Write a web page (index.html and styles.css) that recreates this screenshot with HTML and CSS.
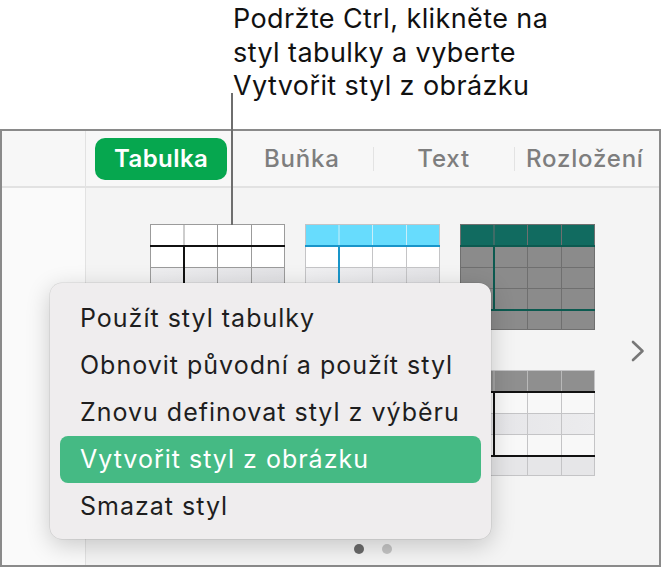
FILE: index.html
```html
<!DOCTYPE html>
<html lang="cs">
<head>
    <meta charset="UTF-8">
    <meta name="viewport" content="width=device-width, initial-scale=1.0">
    <title>Styl tabulky</title>
    <link rel="stylesheet" href="styles.css">
</head>
<body>

    <div class="callout">
        Podržte Ctrl, klikněte na<br>
        styl tabulky a vyberte<br>
        Vytvořit styl z obrázku
    </div>
    <div class="leader"></div>

    <div class="window">
        <div class="side-top"></div>
        <div class="tabs">
            <div class="tab active">Tabulka</div>
            <div class="tab">Buňka</div>
            <div class="tab sep">Text</div>
            <div class="tab sep">Rozložení</div>
        </div>
        <div class="sidebar"></div>
        <div class="pane">
            <div class="thumbs">
                <!-- plain -->
                <svg class="thumb" viewBox="0 0 135 106" width="135" height="106">
                    <defs>
                        <linearGradient id="g1" x1="0" y1="0" x2="1" y2="0">
                            <stop offset="0" stop-color="#eeeef0"/>
                            <stop offset="1" stop-color="#e2e2e5"/>
                        </linearGradient>
                    </defs>
                    <rect x="0" y="0" width="135" height="106" fill="#fff"/>
                    <rect x="0" y="43" width="135" height="21" fill="url(#g1)"/>
                    <rect x="0" y="85" width="135" height="21" fill="url(#g1)"/>
                    <g stroke="#9b9b9b" stroke-width="1">
                        <line x1="34" y1="0" x2="34" y2="22"/>
                        <line x1="67.5" y1="0" x2="67.5" y2="106"/>
                        <line x1="101.5" y1="0" x2="101.5" y2="106"/>
                        <line x1="0" y1="43.5" x2="135" y2="43.5"/>
                        <line x1="0" y1="64.5" x2="135" y2="64.5"/>
                        <line x1="0" y1="85.5" x2="135" y2="85.5"/>
                        <rect x="0.5" y="0.5" width="134" height="105" fill="none"/>
                    </g>
                    <line x1="0" y1="22" x2="135" y2="22" stroke="#111" stroke-width="2"/>
                    <line x1="34" y1="22" x2="34" y2="106" stroke="#111" stroke-width="2"/>
                </svg>
                <!-- cyan -->
                <svg class="thumb" viewBox="0 0 135 106" width="135" height="106">
                    <defs>
                        <linearGradient id="g2" x1="0" y1="0" x2="1" y2="0">
                            <stop offset="0" stop-color="#f0f0f2"/>
                            <stop offset="1" stop-color="#e4e4e7"/>
                        </linearGradient>
                    </defs>
                    <rect x="0" y="0" width="135" height="106" fill="#fff"/>
                    <rect x="0" y="0" width="135" height="22" fill="#67dcfd"/>
                    <rect x="0" y="43" width="135" height="21" fill="url(#g2)"/>
                    <rect x="0" y="85" width="135" height="21" fill="url(#g2)"/>
                    <g stroke="#c9eef9" stroke-width="1">
                        <line x1="34" y1="0" x2="34" y2="22"/>
                        <line x1="67.5" y1="0" x2="67.5" y2="22"/>
                        <line x1="101.5" y1="0" x2="101.5" y2="22"/>
                    </g>
                    <g stroke="#c4c4c6" stroke-width="1">
                        <line x1="67.5" y1="22" x2="67.5" y2="106"/>
                        <line x1="101.5" y1="22" x2="101.5" y2="106"/>
                        <line x1="0" y1="43.5" x2="135" y2="43.5"/>
                        <line x1="0" y1="64.5" x2="135" y2="64.5"/>
                        <line x1="0" y1="85.5" x2="135" y2="85.5"/>
                        <rect x="0.5" y="0.5" width="134" height="105" fill="none"/>
                    </g>
                    <line x1="0" y1="22" x2="135" y2="22" stroke="#1995c9" stroke-width="2"/>
                    <line x1="34" y1="22" x2="34" y2="106" stroke="#1995c9" stroke-width="2"/>
                </svg>
                <!-- teal / grey -->
                <svg class="thumb" viewBox="0 0 135 106" width="135" height="106">
                    <rect x="0" y="0" width="135" height="106" fill="#8b8b8b"/>
                    <rect x="0" y="0" width="135" height="22" fill="#116b60"/>
                    <g stroke="#6f6f6f" stroke-width="1">
                        <line x1="34" y1="0" x2="34" y2="22"/>
                        <line x1="67.5" y1="0" x2="67.5" y2="106"/>
                        <line x1="101.5" y1="0" x2="101.5" y2="106"/>
                        <line x1="0" y1="43.5" x2="135" y2="43.5"/>
                        <line x1="0" y1="64.5" x2="135" y2="64.5"/>
                        <rect x="0.5" y="0.5" width="134" height="105" fill="none"/>
                    </g>
                    <line x1="0" y1="22" x2="135" y2="22" stroke="#0c5a50" stroke-width="2"/>
                    <line x1="34" y1="22" x2="34" y2="86" stroke="#0c5a50" stroke-width="2"/>
                    <line x1="0" y1="86" x2="135" y2="86" stroke="#0c5a50" stroke-width="2"/>
                </svg>
                <!-- row 2 -->
                <svg class="thumb" viewBox="0 0 135 106" width="135" height="106">
                    <rect x="0" y="0" width="135" height="106" fill="#fff"/>
                    <rect x="0" y="0" width="135" height="22" fill="#dcdcdc"/>
                </svg>
                <svg class="thumb" viewBox="0 0 135 106" width="135" height="106">
                    <rect x="0" y="0" width="135" height="106" fill="#fff"/>
                    <rect x="0" y="0" width="135" height="22" fill="#8e8e8e"/>
                </svg>
                <svg class="thumb" viewBox="0 0 135 106" width="135" height="106">
                    <defs>
                        <linearGradient id="g4" x1="0" y1="0" x2="1" y2="0">
                            <stop offset="0" stop-color="#e4e4e7"/>
                            <stop offset="1" stop-color="#ececee"/>
                        </linearGradient>
                    </defs>
                    <rect x="0" y="0" width="135" height="106" fill="#f8f8f8"/>
                    <rect x="0" y="43" width="135" height="21" fill="url(#g4)"/>
                    <rect x="0" y="85" width="135" height="21" fill="#e6e6e8"/>
                    <rect x="0" y="0" width="135" height="22" fill="#8f8f8f"/>
                    <g stroke="#b9b9b9" stroke-width="1">
                        <line x1="34" y1="0" x2="34" y2="22"/>
                        <line x1="67.5" y1="0" x2="67.5" y2="22"/>
                        <line x1="101.5" y1="0" x2="101.5" y2="22"/>
                    </g>
                    <g stroke="#c4c4c6" stroke-width="1">
                        <line x1="67.5" y1="22" x2="67.5" y2="106"/>
                        <line x1="101.5" y1="22" x2="101.5" y2="106"/>
                        <line x1="0" y1="43.5" x2="135" y2="43.5"/>
                        <line x1="0" y1="64.5" x2="135" y2="64.5"/>
                        <rect x="0.5" y="0.5" width="134" height="105" fill="none"/>
                    </g>
                    <line x1="0" y1="22" x2="135" y2="22" stroke="#111" stroke-width="2"/>
                    <line x1="34" y1="22" x2="34" y2="86" stroke="#111" stroke-width="2"/>
                    <line x1="0" y1="86" x2="135" y2="86" stroke="#111" stroke-width="2"/>
                </svg>
            </div>

            <svg class="next" viewBox="0 0 14 22" width="14" height="22">
                <path d="M2 2 L11.5 11 L2 20" fill="none" stroke="#777" stroke-width="2.6" stroke-linecap="round" stroke-linejoin="round"/>
            </svg>

            <div class="dots">
                <span class="dot on"></span>
                <span class="dot"></span>
            </div>
        </div>
    </div>

    <ul class="menu">
        <li class="menu-item">Použít styl tabulky</li>
        <li class="menu-item">Obnovit původní a použít styl</li>
        <li class="menu-item">Znovu definovat styl z výběru</li>
        <li class="menu-item selected">Vytvořit styl z obrázku</li>
        <li class="menu-item">Smazat styl</li>
    </ul>

</body>
</html>
```

FILE: styles.css
```css
:root {
    --frame: #8a8a8a;
    --line: #e2e2e2;
    --pane-bg: #f4f4f4;
    --side-bg: #fafafa;
    --tab-gray: #7e7e7e;
    --green: #06a74f;
    --menu-green: #45ba84;
    --text: #1e1e1e;
}

/* page */
body {
    margin: 0;
    width: 662px;
    height: 569px;
    overflow: hidden;
    position: relative;
    background: #fff;
    font-family: Inter, "Liberation Sans", sans-serif;
    color: var(--text);
}

/* callout text */
.callout {
    height: 129px;
    box-sizing: border-box;
    padding: 2px 0 0 233px;
    font-size: 27px;
    letter-spacing: 0.4px;
    line-height: 33.5px;
    color: #111;
}

.leader {
    position: absolute;
    left: 231px;
    top: 93px;
    width: 2px;
    height: 132px;
    background: #6e6e6e;
    z-index: 2;
}

/* window */
.window {
    width: 661px;
    height: 438px;
    box-sizing: border-box;
    border: 2px solid var(--frame);
    display: grid;
    grid-template-columns: 84px 1fr;
    grid-template-rows: 57px 1fr;
}

.side-top,
.tabs {
    background: #f7f7f7;
    border-bottom: 2px solid var(--line);
}

.side-top,
.sidebar {
    border-right: 1px solid var(--line);
}

.sidebar {
    background: var(--side-bg);
}

/* tabs */
.tabs {
    display: grid;
    grid-template-columns: repeat(4, 1fr);
    align-items: center;
    padding: 0 4px;
}

.tab {
    text-align: center;
    font-size: 24px;
    letter-spacing: 0.8px;
    font-weight: 500;
    color: var(--tab-gray);
    line-height: 24px;
}

.tab.sep {
    border-left: 1px solid #e3e3e3;
}

.tab.active {
    margin: 0 4px 0 5px;
    height: 42px;
    line-height: 42px;
    border-radius: 10px;
    background: var(--green);
    color: #fff;
    font-weight: 600;
    letter-spacing: 0.4px;
}

/* style pane */
.pane {
    background: var(--pane-bg);
    position: relative;
    display: flex;
    flex-direction: column;
    align-items: center;
    padding-top: 36px;
}

.thumbs {
    display: grid;
    grid-template-columns: repeat(3, 135px);
    column-gap: 20px;
    row-gap: 40px;
}

.thumb {
    display: block;
}

.next {
    position: absolute;
    right: 14px;
    top: 152px;
}

.dots {
    display: flex;
    gap: 18px;
    margin-top: 68px;
}

.dot {
    width: 10px;
    height: 10px;
    border-radius: 50%;
    background: #c4c4c4;
}

.dot.on {
    background: #6a6a6a;
}

/* context menu */
.menu {
    position: absolute;
    left: 50px;
    top: 283px;
    width: 441px;
    height: 256px;
    box-sizing: border-box;
    margin: 0;
    padding: 12px 10px 9px;
    list-style: none;
    border-radius: 12px;
    background: #efedee;
    box-shadow: 0 0 0 0.5px rgba(0, 0, 0, 0.12), 0 6px 24px rgba(0, 0, 0, 0.2);
    z-index: 3;
}

.menu-item {
    height: 47px;
    line-height: 47px;
    padding-left: 20px;
    font-size: 25px;
    letter-spacing: 1px;
    color: var(--text);
    border-radius: 8px;
}

.menu-item.selected {
    background: var(--menu-green);
    color: #fff;
}
```
